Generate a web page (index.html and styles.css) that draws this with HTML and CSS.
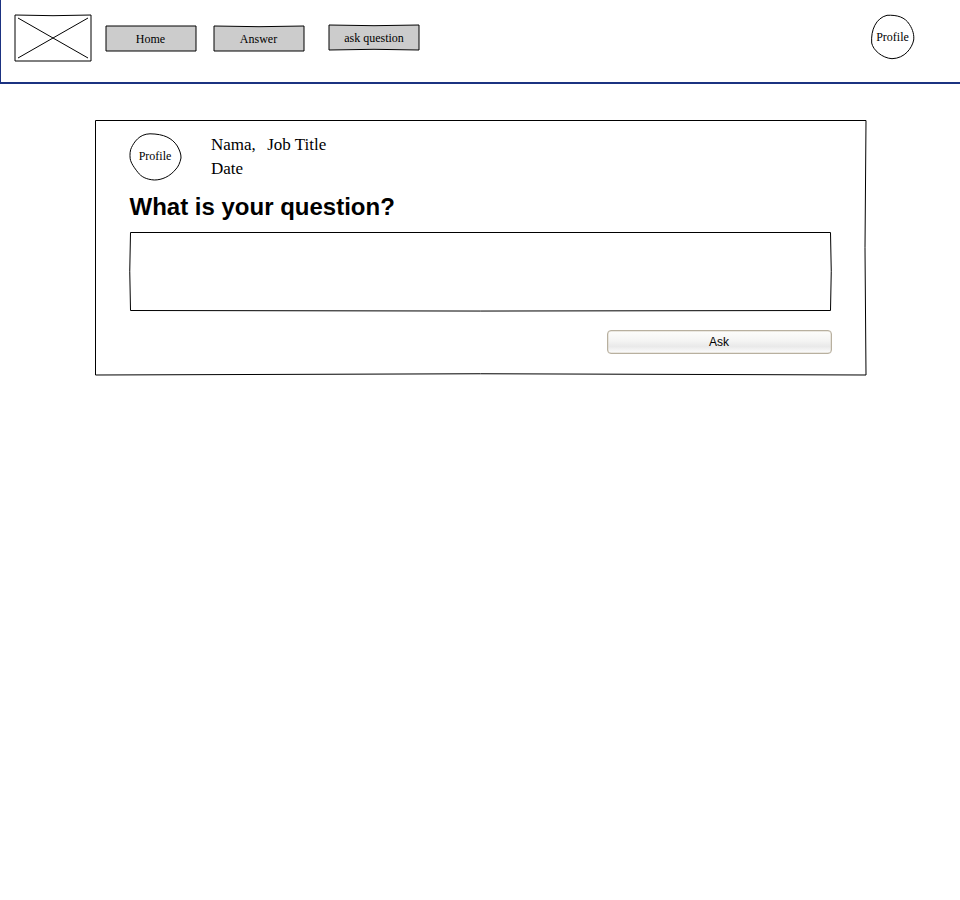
FILE: index.html
```html
<!DOCTYPE html>
<html lang="en">
<head>
<meta charset="utf-8">
<title>Ask question</title>
<link rel="stylesheet" href="styles.css">
</head>
<body>
<header class="topbar">
  <svg class="logo" width="76" height="46" viewBox="0 0 76 46">
    <path d="M0 0Q38 1.4 76 0V46H0Z"/>
    <path d="M3 3L73 43M73 3L3 43"/>
  </svg>
  <nav class="nav">
    <a class="sketch nav-item home">
      <svg width="90" height="25" viewBox="0 0 90 25"><path d="M0 0H90V25H0Z"/></svg>
      <span>Home</span>
    </a>
    <a class="sketch nav-item answer">
      <svg width="90" height="25" viewBox="0 0 90 25"><path d="M0 0Q45 1.4 90 0V25H0Z"/></svg>
      <span>Answer</span>
    </a>
    <a class="sketch nav-item ask-link">
      <svg width="90" height="25" viewBox="0 0 90 25"><path d="M0 0Q45 1.4 90 0V25Q45 23.6 0 25Z"/></svg>
      <span>ask question</span>
    </a>
  </nav>
  <a class="sketch profile">
    <svg width="43" height="44" viewBox="0 0 43 44"><path d="M16 .3C26 -.2 34 2 38.500 9.500C42 15 43.200 20 42.700 25C41 33 34 43.300 21 43.700C11 43 2 35 .7 28C-.3 15 5 3 16 .3Z"/></svg>
    <span>Profile</span>
  </a>
</header>
<main class="sketch card">
  <svg width="771" height="255" viewBox="0 0 771 255"><path d="M.5 .5H771Q769 127 771 255Q385 252.500 .5 255Z"/></svg>
  <div class="content">
    <div class="author">
      <a class="sketch avatar">
        <svg width="51" height="47" viewBox="0 0 51 47"><path d="M20 .8C34 1 42 5 47.300 13C49.500 17 51.200 21 51 25C50 30 48 34 46 36C40 43.500 32 47 24.300 47C16 46.500 11 43.500 8 39.500C4.500 35 .8 30 .2 25.700C-.3 22 0 17 1.500 14.500C4 9.500 9 1 20 .8Z"/></svg>
        <span>Profile</span>
      </a>
      <div class="meta">
        <div><span class="name">Nama,</span><span>Job Title</span></div>
        <div>Date</div>
      </div>
    </div>
    <h1>What is your question?</h1>
    <div class="question">
      <svg width="701" height="79" viewBox="0 0 701 79"><path d="M.5 .5H700.500Q702 39 700.500 78.500Q350 79.600 .5 78.500Q-1 39 .5 .5Z"/></svg>
    </div>
    <button class="ask" type="button">Ask</button>
  </div>
</main>
</body>
</html>
```
FILE: styles.css
```css
* {
  box-sizing: border-box;
}

body {
  margin: 0;
  min-height: 100vh;
  background: #fff;
  color: #000;
  font-family: "Liberation Serif", serif;
}

svg {
  display: block;
  overflow: visible;
  fill: #fff;
  stroke: #000;
  stroke-width: 1;
  stroke-linejoin: round;
}

.topbar {
  display: flex;
  align-items: flex-start;
  height: 84px;
  padding: 15px 46px 0 14px;
  border-left: 1px solid #1b3281;
  border-bottom: 2px solid #1b3281;
}

.nav {
  display: flex;
  align-items: flex-start;
  margin-left: 15px;
}

.sketch {
  display: grid;
}

.sketch > * {
  grid-area: 1 / 1;
}

.sketch > span {
  place-self: center;
  white-space: nowrap;
  font-size: 12px;
  line-height: 14px;
}

.nav-item svg {
  fill: #ccc;
}

.home span,
.answer span {
  margin-right: 1px;
}

.home {
  margin-top: 11px;
}

.answer {
  margin: 11px 0 0 18px;
}

.ask-link {
  margin: 10px 0 0 25px;
}

.profile {
  margin-left: auto;
}

.card {
  width: 771px;
  height: 256px;
  margin: 36px 0 0 95px;
}

.content {
  padding: 13px 34px 0 35px;
}

.author {
  display: flex;
  height: 47px;
}

.avatar span {
  margin: 0 1px 1px 0;
}

.meta {
  margin-left: 30px;
  font-size: 17px;
  line-height: 24px;
}

.name {
  margin-right: 11.3px;
}

h1 {
  margin: 13px 0 12px -0.5px;
  font: bold 24px/27px "Liberation Sans", sans-serif;
}

.ask {
  display: block;
  width: 225px;
  height: 24px;
  margin: 19px 0 0 auto;
  padding: 0 1px 0 0;
  border: 1px solid #b8b09f;
  border-radius: 4px;
  box-shadow: inset 0 0 0 0.5px #d8d2c6;
  background: linear-gradient(#fdfdfb, #f4f4f3 45%, #e9e9e9 70%, #fdfdfd);
  font: 12px/20px "Liberation Sans", sans-serif;
  color: #000;
}
```
